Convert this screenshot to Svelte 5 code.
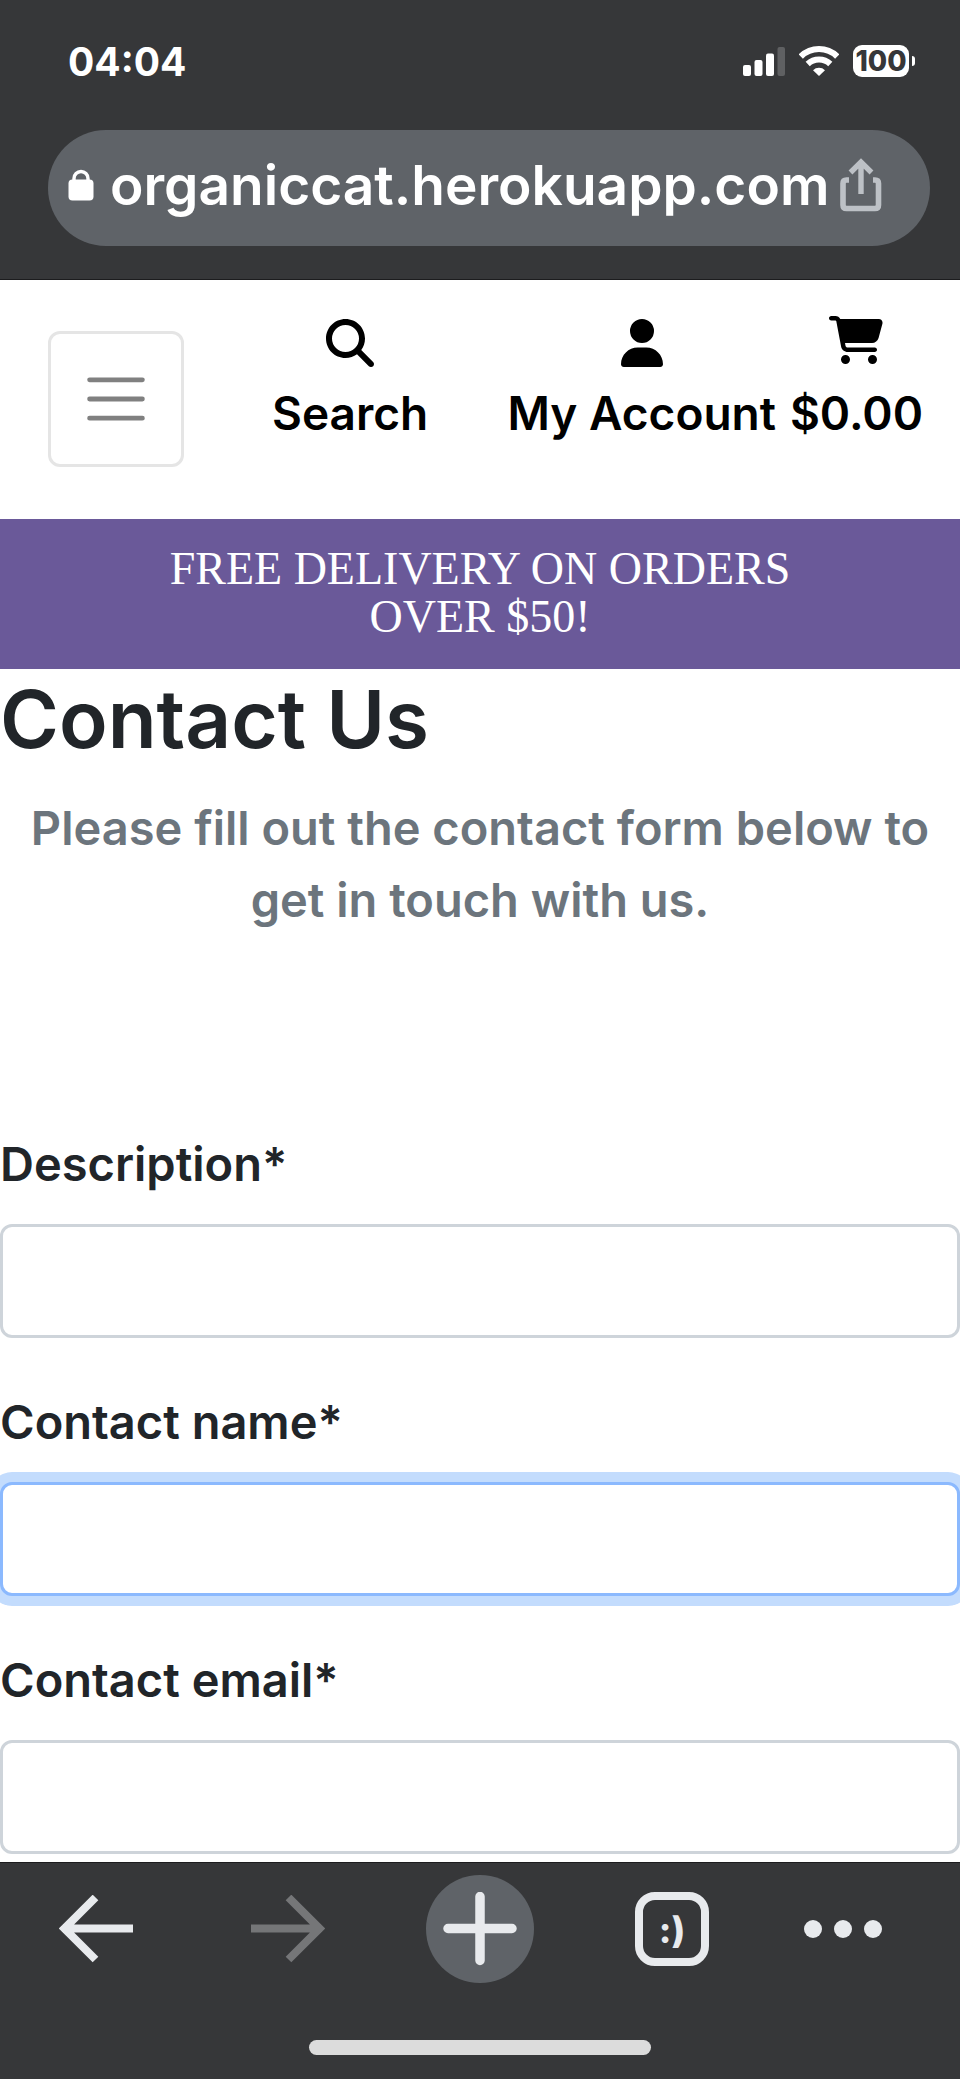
<script>
  const fields = [
    { id: 'description', label: 'Description*', type: 'text', active: false },
    { id: 'contact-name', label: 'Contact name*', type: 'text', active: true },
    { id: 'contact-email', label: 'Contact email*', type: 'email', active: false }
  ];
</script>

<div class="screen">
  <header class="browser">
    <div class="status">
      <span class="time">04:04</span>
      <div class="indicators">
        <svg width="42" height="30" viewBox="0 0 42 30" aria-hidden="true">
          <g fill="#fff">
            <rect x="0" y="19" width="8" height="11" rx="2" />
            <rect x="11.500" y="14" width="8" height="16" rx="2" />
            <rect x="23" y="7.500" width="8" height="22.500" rx="2" />
          </g>
          <rect x="34.500" y="1" width="7.500" height="29" rx="2" fill="#5f6062" />
        </svg>
        <svg width="40" height="30" viewBox="0 0 40 30" aria-hidden="true">
          <g fill="none" stroke="#fff" stroke-width="6">
            <path d="M1.800 10.500A26 26 0 0 1 38.200 10.500" />
            <path d="M8.700 18A16.400 16.400 0 0 1 31.300 18" />
          </g>
          <path d="M20 30L14 24.200A8.800 8.800 0 0 1 26 24.200Z" fill="#fff" />
        </svg>
        <div class="battery"><span class="level">100</span><span class="nub"></span></div>
      </div>
    </div>
    <div class="address">
      <svg width="26" height="32" viewBox="0 0 26 32" aria-hidden="true">
        <rect x="0.500" y="10.500" width="25" height="21" rx="4" fill="#fff" />
        <path d="M6 13V9.500A7 7 0 0 1 20 9.500V13" fill="none" stroke="#fff" stroke-width="3.400" />
      </svg>
      <span class="url">organiccat.herokuapp.com</span>
      <button class="plain" aria-label="Share">
        <svg width="42" height="54" viewBox="0 0 42 54" fill="none" stroke="#bdc1c6">
          <path d="M9 22H6.500Q3 22 3 25.500V47Q3 50.500 6.500 50.500H35Q38.500 50.500 38.500 47V25.500Q38.500 22 35 22H33" stroke-width="5.600" />
          <path d="M21 36V5M10.500 14.500L21 4L31.500 14.500" stroke-width="5.400" />
        </svg>
      </button>
    </div>
  </header>

  <nav>
    <button class="toggler" aria-label="Toggle navigation">
      <svg width="72" height="72" viewBox="0 0 30 30">
        <path d="M4 7h22M4 15h22M4 23h22" stroke="#808080" stroke-width="2" stroke-linecap="round" />
      </svg>
    </button>
    <a class="item search" href="#search">
      <svg width="48" height="48" viewBox="0 0 512 512" aria-hidden="true">
        <path d="M416 208c0 45.900-14.900 88.300-40 122.700L502.600 457.400c12.500 12.500 12.500 32.800 0 45.300s-32.800 12.500-45.300 0L330.700 376c-34.400 25.200-76.800 40-122.700 40C93.100 416 0 322.900 0 208S93.100 0 208 0S416 93.100 416 208zM208 352a144 144 0 1 0 0-288 144 144 0 1 0 0 288z" />
      </svg>
      Search
    </a>
    <a class="item" href="#account">
      <svg width="42" height="48" viewBox="0 0 448 512" aria-hidden="true">
        <path d="M224 256A128 128 0 1 0 224 0a128 128 0 1 0 0 256zm-45.700 48C79.800 304 0 383.800 0 482.300C0 498.700 13.300 512 29.700 512H418.300c16.400 0 29.700-13.300 29.700-29.700C448 383.800 368.200 304 269.700 304H178.300z" />
      </svg>
      My Account
    </a>
    <a class="item cart" href="#cart">
      <svg width="54" height="48" viewBox="0 0 576 512" aria-hidden="true">
        <path d="M0 24C0 10.700 10.700 0 24 0H69.500c22 0 41.500 12.800 50.600 32h411c26.300 0 45.500 25 38.600 50.400l-41 152.300c-8.500 31.400-37 53.300-69.500 53.300H170.700l5.400 28.500c2.200 11.300 12.100 19.500 23.600 19.500H488c13.300 0 24 10.700 24 24s-10.700 24-24 24H199.700c-34.600 0-64.300-24.600-70.700-58.500L77.400 54.500c-.7-3.800-4-6.500-7.900-6.500H24C10.700 48 0 37.300 0 24zM128 464a48 48 0 1 1 96 0 48 48 0 1 1-96 0zm336-48a48 48 0 1 1 0 96 48 48 0 1 1 0-96z" />
      </svg>
      $0.00
    </a>
  </nav>

  <div class="banner">FREE DELIVERY ON ORDERS<br />OVER $50!</div>

  <main>
    <h1>Contact Us</h1>
    <p>Please fill out the contact form below to get in touch with us.</p>
    <form>
      {#each fields as field (field.id)}
        <div class="field">
          <label for={field.id}>{field.label}</label>
          <input id={field.id} type={field.type} class:active={field.active} required />
        </div>
      {/each}
    </form>
  </main>

  <footer>
    <div class="tools">
      <button class="plain" aria-label="Back">
        <svg width="74" height="68" viewBox="0 0 74 68" fill="none" stroke="#e8eaed" stroke-width="8">
          <path d="M74 33.500H7M36.500 2.500L5.500 33.500L36.500 64.500" />
        </svg>
      </button>
      <button class="plain" aria-label="Forward">
        <svg width="74" height="68" viewBox="0 0 74 68" fill="none" stroke="#757678" stroke-width="8">
          <path d="M0 33.500H67M37.500 2.500L68.500 33.500L37.500 64.500" />
        </svg>
      </button>
      <button class="plain new-tab" aria-label="New tab">
        <svg width="74" height="74" viewBox="0 0 74 74" stroke="#e8eaed" stroke-width="9.500" stroke-linecap="round">
          <path d="M37 4.500V68.500M5 36.500H69" />
        </svg>
      </button>
      <button class="plain tabs" aria-label="Tabs">:)</button>
      <button class="plain more" aria-label="More">
        <svg width="78" height="18" viewBox="0 0 78 18" fill="#e8eaed">
          <circle cx="9" cy="9" r="9" /><circle cx="39" cy="9" r="9" /><circle cx="69" cy="9" r="9" />
        </svg>
      </button>
    </div>
    <div class="home"></div>
  </footer>
</div>

<style>
  :global(body) {
    margin: 0;
    background: #fff;
  }
  .screen {
    min-height: 100vh;
    display: flex;
    flex-direction: column;
    overflow-x: hidden;
    font-family: Inter, 'Liberation Sans', sans-serif;
    font-size: 47px;
    font-weight: 600;
    color: #212529;
  }
  svg {
    display: block;
    flex: none;
  }
  .plain {
    display: flex;
    align-items: center;
    justify-content: center;
    padding: 0;
    border: 0;
    background: none;
    font: inherit;
    color: inherit;
  }
  .browser {
    background: #363739;
    border-bottom: 1px solid #1c1c1e;
    padding: 40px 30px 33px 48px;
    color: #fff;
  }
  .status {
    display: flex;
    align-items: center;
    justify-content: space-between;
    height: 42px;
    padding: 0 15px 0 20px;
    margin-bottom: 48px;
  }
  .time {
    font-size: 39px;
    font-weight: 700;
  }
  .indicators {
    display: flex;
    align-items: center;
    gap: 14px;
  }
  .battery {
    display: flex;
    align-items: center;
    gap: 3px;
  }
  .level {
    width: 56px;
    height: 32px;
    line-height: 32px;
    border-radius: 9px;
    background: #fff;
    color: #363739;
    font-size: 28px;
    font-weight: 800;
    text-align: center;
  }
  .nub {
    width: 3px;
    height: 10px;
    border-radius: 0 5px 5px 0;
    background: #fff;
  }
  .address {
    box-sizing: border-box;
    display: flex;
    align-items: center;
    height: 116px;
    padding: 0 48px 6px 20px;
    border-radius: 58px;
    background: #5f6368;
  }
  .url {
    flex: 1;
    margin-left: 16px;
    font-size: 55px;
    line-height: 72px;
    white-space: nowrap;
  }
  nav {
    display: flex;
    align-items: flex-start;
    padding: 36px 37px 52px 48px;
    color: #000;
    font-size: 46px;
  }
  .toggler {
    display: flex;
    align-items: center;
    justify-content: center;
    flex: none;
    width: 136px;
    height: 136px;
    margin-top: 15px;
    padding: 0;
    border: 3px solid #e5e5e5;
    border-radius: 12px;
    background: none;
  }
  .item {
    display: flex;
    flex-direction: column;
    align-items: center;
    gap: 10px;
    padding-top: 3px;
    line-height: 72px;
    white-space: nowrap;
    color: inherit;
    text-decoration: none;
  }
  .search {
    margin: 0 auto 0 88px;
  }
  .cart {
    margin-left: 14px;
    padding-top: 0;
    gap: 13px;
  }
  .banner {
    padding: 26px 0 28px;
    background: #6a5999;
    color: #fff;
    font-family: 'Liberation Serif', serif;
    font-size: 46px;
    font-weight: 400;
    line-height: 48px;
    text-align: center;
  }
  main {
    flex: 1;
  }
  h1 {
    margin: 0 0 24px;
    font-size: 80px;
    line-height: 99px;
    font-weight: 600;
  }
  p {
    margin: 0;
    padding: 0 24px;
    line-height: 72px;
    text-align: center;
    color: #6c757d;
  }
  form {
    padding-top: 192px;
  }
  .field {
    display: flex;
    flex-direction: column;
    gap: 24px;
    margin-bottom: 48px;
  }
  .field:last-child {
    margin-bottom: 0;
  }
  label {
    line-height: 72px;
  }
  input {
    box-sizing: border-box;
    width: 100%;
    height: 114px;
    padding: 18px 36px;
    border: 3px solid #ced4da;
    border-radius: 12px;
    background: #fff;
    font: inherit;
    outline: 0;
  }
  input.active {
    border-color: #8bb9fe;
    box-shadow: 0 0 0 10px #c3dcfd;
  }
  footer {
    padding: 12px 0 24px;
    background: #363739;
    border-top: 1px solid #1c1c1e;
    color: #e8eaed;
  }
  .tools {
    display: grid;
    grid-template-columns: repeat(5, 1fr);
    align-items: center;
    justify-items: center;
    margin-bottom: 57px;
  }
  .new-tab {
    width: 108px;
    height: 108px;
    border-radius: 50%;
    background: #5f6368;
  }
  .tabs {
    box-sizing: border-box;
    width: 74px;
    height: 74px;
    padding-top: 2px;
    border: 8px solid #e8eaed;
    border-radius: 20px;
    font-size: 36px;
    font-weight: 800;
  }
  .more {
    justify-self: start;
    padding-left: 36px;
  }
  .home {
    width: 342px;
    height: 15px;
    margin: 0 auto;
    border-radius: 8px;
    background: #dcdcdc;
  }
</style>
